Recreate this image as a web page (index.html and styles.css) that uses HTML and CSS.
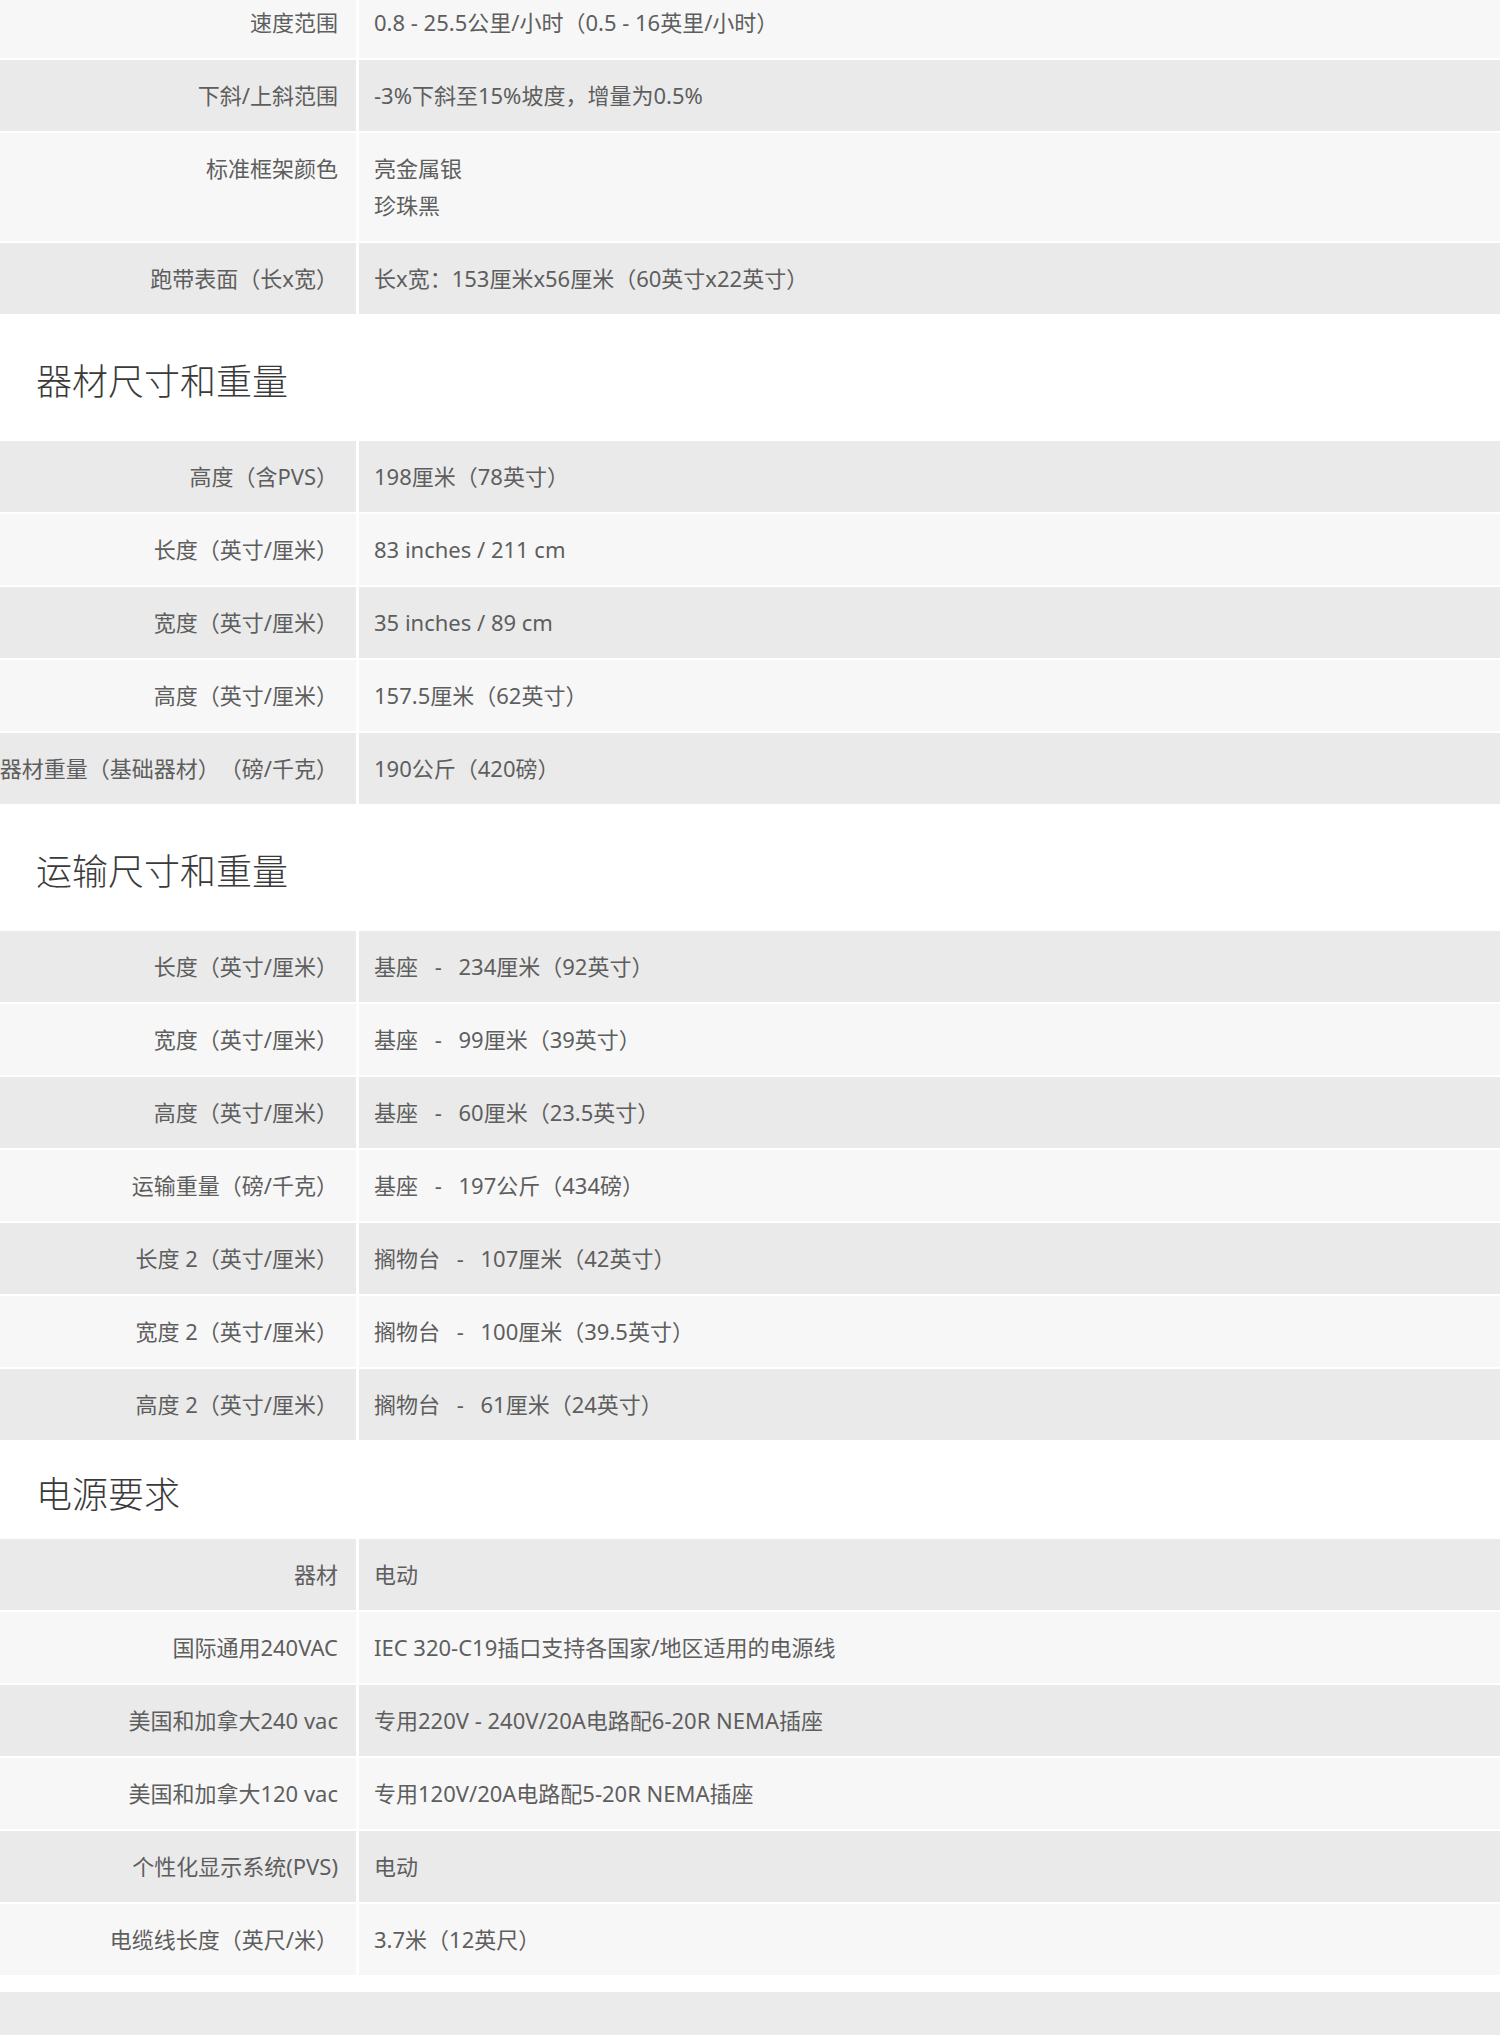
FILE: index.html
```html
<!DOCTYPE html>
<html lang="zh-CN">
<head>
<meta charset="utf-8">
<title>规格参数</title>
<link rel="stylesheet" href="styles.css">
</head>
<body>
<main class="specs">
  <section class="spec-table spec-table--first spec-table--even-shade">
    <div class="spec-row"><div class="spec-label"><span>速度范围</span></div><div class="spec-value">0.8 - 25.5公里/小时（0.5 - 16英里/小时）</div></div>
    <div class="spec-row"><div class="spec-label"><span>下斜/上斜范围</span></div><div class="spec-value">-3%下斜至15%坡度，增量为0.5%</div></div>
    <div class="spec-row"><div class="spec-label"><span>标准框架颜色</span></div><div class="spec-value"><div>亮金属银</div><div>珍珠黑</div></div></div>
    <div class="spec-row"><div class="spec-label"><span>跑带表面（长x宽）</span></div><div class="spec-value">长x宽：153厘米x56厘米（60英寸x22英寸）</div></div>
  </section>

  <h2 class="spec-heading">器材尺寸和重量</h2>
  <section class="spec-table">
    <div class="spec-row"><div class="spec-label"><span>高度（含PVS）</span></div><div class="spec-value">198厘米（78英寸）</div></div>
    <div class="spec-row"><div class="spec-label"><span>长度（英寸/厘米）</span></div><div class="spec-value">83 inches / 211 cm</div></div>
    <div class="spec-row"><div class="spec-label"><span>宽度（英寸/厘米）</span></div><div class="spec-value">35 inches / 89 cm</div></div>
    <div class="spec-row"><div class="spec-label"><span>高度（英寸/厘米）</span></div><div class="spec-value">157.5厘米（62英寸）</div></div>
    <div class="spec-row"><div class="spec-label"><span>器材重量（基础器材）（磅/千克）</span></div><div class="spec-value">190公斤（420磅）</div></div>
  </section>

  <h2 class="spec-heading">运输尺寸和重量</h2>
  <section class="spec-table">
    <div class="spec-row"><div class="spec-label"><span>长度（英寸/厘米）</span></div><div class="spec-value">基座&ensp;&nbsp;-&ensp;&nbsp;234厘米（92英寸）</div></div>
    <div class="spec-row"><div class="spec-label"><span>宽度（英寸/厘米）</span></div><div class="spec-value">基座&ensp;&nbsp;-&ensp;&nbsp;99厘米（39英寸）</div></div>
    <div class="spec-row"><div class="spec-label"><span>高度（英寸/厘米）</span></div><div class="spec-value">基座&ensp;&nbsp;-&ensp;&nbsp;60厘米（23.5英寸）</div></div>
    <div class="spec-row"><div class="spec-label"><span>运输重量（磅/千克）</span></div><div class="spec-value">基座&ensp;&nbsp;-&ensp;&nbsp;197公斤（434磅）</div></div>
    <div class="spec-row"><div class="spec-label"><span>长度 2（英寸/厘米）</span></div><div class="spec-value">搁物台&ensp;&nbsp;-&ensp;&nbsp;107厘米（42英寸）</div></div>
    <div class="spec-row"><div class="spec-label"><span>宽度 2（英寸/厘米）</span></div><div class="spec-value">搁物台&ensp;&nbsp;-&ensp;&nbsp;100厘米（39.5英寸）</div></div>
    <div class="spec-row"><div class="spec-label"><span>高度 2（英寸/厘米）</span></div><div class="spec-value">搁物台&ensp;&nbsp;-&ensp;&nbsp;61厘米（24英寸）</div></div>
  </section>

  <h2 class="spec-heading spec-heading--compact">电源要求</h2>
  <section class="spec-table spec-table--last">
    <div class="spec-row"><div class="spec-label"><span>器材</span></div><div class="spec-value">电动</div></div>
    <div class="spec-row"><div class="spec-label"><span>国际通用240VAC</span></div><div class="spec-value">IEC 320-C19插口支持各国家/地区适用的电源线</div></div>
    <div class="spec-row"><div class="spec-label"><span>美国和加拿大240 vac</span></div><div class="spec-value">专用220V - 240V/20A电路配6-20R NEMA插座</div></div>
    <div class="spec-row"><div class="spec-label"><span>美国和加拿大120 vac</span></div><div class="spec-value">专用120V/20A电路配5-20R NEMA插座</div></div>
    <div class="spec-row"><div class="spec-label"><span>个性化显示系统(PVS)</span></div><div class="spec-value">电动</div></div>
    <div class="spec-row"><div class="spec-label"><span>电缆线长度（英尺/米）</span></div><div class="spec-value">3.7米（12英尺）</div></div>
  </section>
</main>
<footer class="page-footer"></footer>
</body>
</html>
```

FILE: styles.css
```css
html, body {
  margin: 0;
  padding: 0;
  background: #ffffff;
}

body {
  font-family: "Noto Sans", "Noto Sans CJK SC", sans-serif;
  color: #5e5e5e;
  overflow-x: hidden;
  text-spacing-trim: space-all;
}

.specs {
  display: flex;
  flex-direction: column;
}

.spec-table {
  display: flex;
  flex-direction: column;
  gap: 2px;
}

.spec-table--first {
  margin-top: -13px;
}

.spec-row {
  display: grid;
  grid-template-columns: 356px 1fr;
  column-gap: 3px;
  font-size: 22px;
  line-height: 37px;
}

.spec-label,
.spec-value {
  background: #f7f7f7;
  padding-top: 17px;
  padding-bottom: 17px;
}

.spec-row:nth-child(odd) .spec-label,
.spec-row:nth-child(odd) .spec-value {
  background: #eaeaea;
}

.spec-table--even-shade .spec-row:nth-child(odd) .spec-label,
.spec-table--even-shade .spec-row:nth-child(odd) .spec-value {
  background: #f7f7f7;
}

.spec-table--even-shade .spec-row:nth-child(even) .spec-label,
.spec-table--even-shade .spec-row:nth-child(even) .spec-value {
  background: #eaeaea;
}

.spec-label {
  display: flex;
  justify-content: flex-end;
  padding-right: 18px;
  white-space: nowrap;
  min-width: 0;
}

.spec-label span {
  flex-shrink: 0;
}

.spec-value {
  padding-left: 15px;
  padding-right: 15px;
}

.spec-heading {
  margin: 0;
  padding: 41px 0 38px 36px;
  font-family: "Noto Sans CJK SC", sans-serif;
  font-size: 36px;
  line-height: 48px;
  font-weight: 300;
  color: #3a3a3a;
}

.spec-heading--compact {
  padding-top: 28px;
  padding-bottom: 23px;
}

.spec-table--last {
  margin-bottom: 17px;
}

.page-footer {
  height: 80px;
  background: #ebebeb;
}
```
